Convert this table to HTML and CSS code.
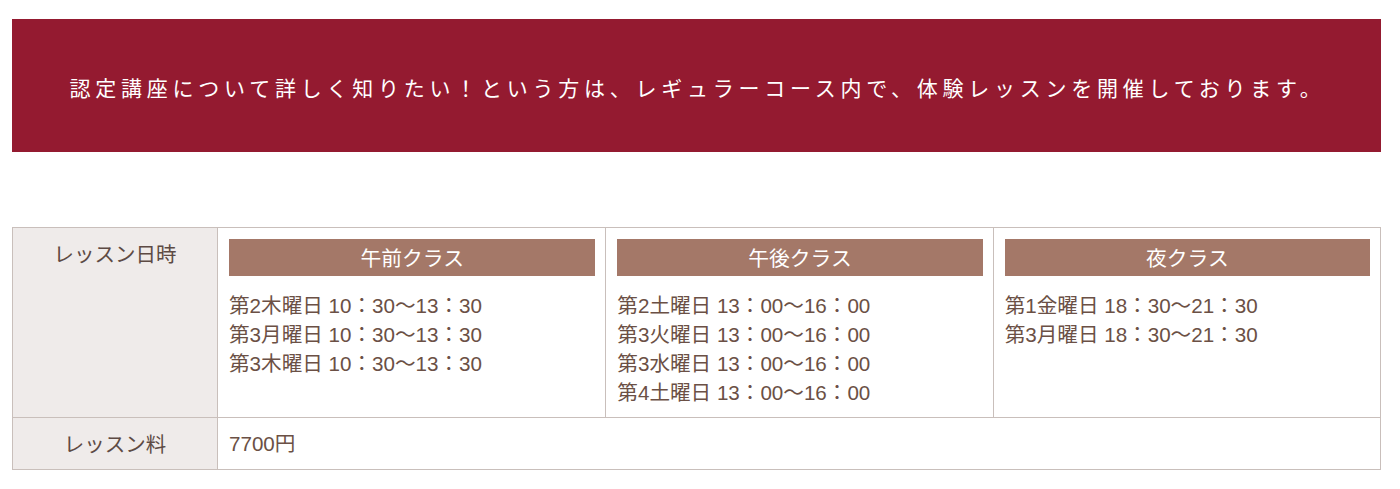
FILE: index.html
```html
<!DOCTYPE html>
<html lang="ja">
<head>
<meta charset="utf-8">
<link rel="stylesheet" href="styles.css">
</head>
<body>
<div class="page">
  <div class="banner">
    <p class="banner-text">認定講座について詳しく知りたい！という方は、レギュラーコース内で、体験レッスンを開催しております。</p>
  </div>
  <table class="lesson">
    <tr>
      <th class="label">レッスン日時</th>
      <td class="classes-cell">
        <div class="classes">
          <div class="cls">
            <div class="cls-head">午前クラス</div>
            <ul class="times">
              <li>第2木曜日 10：30〜13：30</li>
              <li>第3月曜日 10：30〜13：30</li>
              <li>第3木曜日 10：30〜13：30</li>
            </ul>
          </div>
          <div class="cls">
            <div class="cls-head">午後クラス</div>
            <ul class="times">
              <li>第2土曜日 13：00〜16：00</li>
              <li>第3火曜日 13：00〜16：00</li>
              <li>第3水曜日 13：00〜16：00</li>
              <li>第4土曜日 13：00〜16：00</li>
            </ul>
          </div>
          <div class="cls">
            <div class="cls-head">夜クラス</div>
            <ul class="times">
              <li>第1金曜日 18：30〜21：30</li>
              <li>第3月曜日 18：30〜21：30</li>
            </ul>
          </div>
        </div>
      </td>
    </tr>
    <tr>
      <th class="label">レッスン料</th>
      <td class="price">7700円</td>
    </tr>
  </table>
</div>
</body>
</html>
```

FILE: styles.css
```css
html, body {
  margin: 0;
  padding: 0;
  background: #ffffff;
}
body {
  font-family: "Liberation Sans", "Noto Sans CJK JP", sans-serif;
  color: #6b5045;
}
.page {
  padding: 19px 19px 0 12px;
}
.banner {
  background: #941a30;
  height: 133px;
  display: flex;
  align-items: center;
  justify-content: center;
}
.banner-text {
  margin: 0;
  color: #ffffff;
  font-family: "Noto Sans CJK JP", sans-serif;
  font-weight: 400;
  font-size: 21px;
  letter-spacing: 4.75px;
  line-height: 30px;
  padding-left: 2px;
  padding-top: 3px;
}
.lesson {
  margin-top: 75px;
  width: 100%;
  border-collapse: collapse;
  font-size: 20.6px;
  line-height: 29px;
}
.lesson th, .lesson td {
  border: 1px solid #c9bfbb;
  vertical-align: top;
}
.label {
  width: 204px;
  background: #efebea;
  font-weight: normal;
  color: #5d4a44;
  text-align: center;
  padding: 11px 0;
  font-family: "Noto Sans CJK JP", sans-serif;
  font-size: 20.5px;
}
.classes-cell {
  padding: 0;
}
.classes {
  display: grid;
  grid-template-columns: 1fr 1fr 1fr;
}
.cls {
  padding: 11px 10px 10px 11px;
}
.cls + .cls {
  border-left: 1px solid #c9bfbb;
}
.cls-head {
  background: #a47868;
  color: #ffffff;
  height: 37px;
  line-height: 37px;
  text-align: center;
  font-family: "Noto Sans CJK JP", sans-serif;
  font-size: 20.8px;
}
.times {
  list-style: none;
  margin: 15px 0 0;
  padding: 0;
}
.price {
  padding: 11px 11px;
}
```
